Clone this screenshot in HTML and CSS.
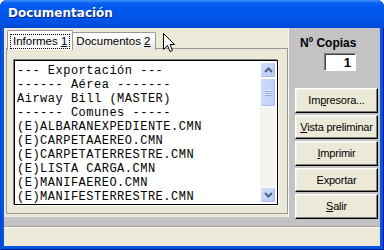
FILE: index.html
```html
<!DOCTYPE html>
<html lang="es">

<head>
    <meta charset="UTF-8">
    <link rel="stylesheet" href="styles.css">
    <title>Documentación</title>
</head>

<body>
    <div class="window">
        <div class="titlebar">Documentación</div>
        <div class="client">
            <div class="main">
                <div class="tabsArea">
                    <div class="tabstrip">
                        <div class="tab selected"><span class="focus">Informes <u>1</u></span></div>
                        <div class="tab">Documentos <u>2</u></div>
                    </div>
                    <div class="tabpage">
                        <div class="listbox">
                            <div class="lines">
                                <div class="line">--- Exportación ---</div>
                                <div class="line">------ Aérea -------</div>
                                <div class="line">Airway Bill (MASTER)</div>
                                <div class="line">------ Comunes -----</div>
                                <div class="line">(E)ALBARANEXPEDIENTE.CMN</div>
                                <div class="line">(E)CARPETAAEREO.CMN</div>
                                <div class="line">(E)CARPETATERRESTRE.CMN</div>
                                <div class="line">(E)LISTA CARGA.CMN</div>
                                <div class="line">(E)MANIFAEREO.CMN</div>
                                <div class="line">(E)MANIFESTERRESTRE.CMN</div>
                            </div>
                            <div class="scrollbar">
                                <div class="sbtn">
                                    <svg width="9" height="6" viewBox="0 0 9 6"><path d="M1 5 L4.5 1.5 L8 5" fill="none" stroke="#4d6185" stroke-width="2"/></svg>
                                </div>
                                <div class="track">
                                    <div class="thumb">
                                        <svg width="7" height="7" viewBox="0 0 7 7"><path d="M0 1.5h7M0 3.5h7M0 5.5h7" stroke="#e8eefc" stroke-width="1"/><path d="M0 2.5h7M0 4.5h7M0 6.5h7" stroke="#8ca4dc" stroke-width="1"/></svg>
                                    </div>
                                </div>
                                <div class="sbtn">
                                    <svg width="9" height="6" viewBox="0 0 9 6"><path d="M1 1 L4.5 4.5 L8 1" fill="none" stroke="#4d6185" stroke-width="2"/></svg>
                                </div>
                            </div>
                        </div>
                    </div>
                </div>
                <div class="side">
                    <div class="copiasLabel">Nº Copias</div>
                    <div class="copias">1</div>
                    <div class="buttons">
                        <div class="btn">Im<u>p</u>resora...</div>
                        <div class="btn"><u>V</u>ista preliminar</div>
                        <div class="btn"><u>I</u>mprimir</div>
                        <div class="btn">Exportar</div>
                        <div class="btn"><u>S</u>alir</div>
                    </div>
                </div>
            </div>
            <div class="statusbar"></div>
        </div>
        <svg class="cursor" width="12" height="20" viewBox="0 0 12 20">
            <path d="M0.5 0.5 L0.5 16.5 L4.5 12.5 L7 18.5 L9.5 17.5 L7 11.5 L11.5 11.5 Z" fill="#fff" stroke="#000" stroke-width="1"/>
        </svg>
    </div>
</body>

</html>
```

FILE: styles.css
```css
* {
    padding: 0;
    margin: 0;
    box-sizing: border-box;
}

body {
    width: 384px;
    height: 250px;
    overflow: hidden;
    font-family: "Liberation Sans", Arial, sans-serif;
    font-size: 11px;
    color: #000;
}

.window {
    position: relative;
    width: 384px;
    height: 250px;
    background-color: #0055e5;
    border-radius: 7px 7px 0 0;
    padding: 0 4px 4px 4px;
    display: flex;
    flex-direction: column;
    box-shadow: inset 1px 0 0 #0a3fbf, inset -1px 0 0 #00138c, inset 0 -1px 0 #00138c;
}

.titlebar {
    height: 28px;
    margin: 0 -4px;
    padding: 6px 0 0 8px;
    border-radius: 7px 7px 0 0;
    background: linear-gradient(#3d95ff 0, #0a62f2 3px, #0058ee 8px, #0055e8 18px, #0050e0 24px, #0046d4 28px);
    color: #fff;
    font-family: "DejaVu Sans", sans-serif;
    font-weight: bold;
    font-size: 12px;
    text-shadow: 1px 1px 0 #0a1e7a;
}

.client {
    flex: 1;
    display: flex;
    flex-direction: column;
    background-color: #ece9d8;
}

.main {
    height: 199px;
    display: flex;
    background-color: #c3c3c3;
    border-bottom: 1px solid #a0a0a0;
}

.tabsArea {
    width: 285px;
    height: 189px;
    background-color: #ece9d8;
    border-right: 1px solid #f8f8f4;
    padding: 3px 0 0 2px;
    display: flex;
    flex-direction: column;
}

.tabstrip {
    display: flex;
    height: 18px;
    padding-left: 1px;
    position: relative;
    z-index: 1;
    white-space: nowrap;
    font-size: 11.5px;
}

.tab {
    height: 18px;
    margin-top: 1px;
    padding: 2px 4px 0 3px;
    border: 1px solid #919b9c;
    border-bottom: none;
    border-radius: 2px 2px 0 0;
    background: linear-gradient(#fefefe, #f4f3ee 60%, #e8e6dc);
    margin-left: -1px;
}

.tab.selected {
    height: 20px;
    margin-top: -1px;
    padding: 3px 2px 0 2px;
    background: #fcfcfe;
    margin-left: 0;
}

.focus {
    display: inline-block;
    border: 1px dotted #000;
    padding: 0 2px 1px 2px;
    line-height: 12px;
}

.tabpage {
    width: 282px;
    height: 166px;
    margin-top: -1px;
    border: 1px solid #919b9c;
    background-color: #ece9d8;
    padding: 11px 0 0 7px;
}

.listbox {
    width: 264px;
    height: 145px;
    background-color: #fff;
    border: 1px solid #000;
    box-shadow: -1px -1px 0 #808080, 1px 1px 0 #fff;
    display: flex;
    padding: 1px 1px 0 2px;
}

.lines {
    flex: 1;
    padding-top: 2px;
    font-family: "Liberation Mono", "Courier New", monospace;
    font-size: 12px;
    letter-spacing: 0.5px;
    line-height: 14px;
    overflow: hidden;
}

.line {
    white-space: pre;
}

.scrollbar {
    width: 16px;
    display: flex;
    flex-direction: column;
    background-color: #f5f4ee;
    margin-bottom: 1px;
}

.sbtn {
    height: 16px;
    border: 1px solid #fff;
    border-radius: 2px;
    background: linear-gradient(135deg, #d0defc, #b8cbf6);
    box-shadow: inset -1px -1px 0 #a8bbe9;
    display: flex;
    align-items: center;
    justify-content: center;
}

.track {
    flex: 1;
}

.thumb {
    height: 29px;
    border: 1px solid #fff;
    border-radius: 2px;
    background: linear-gradient(90deg, #cddbfc, #bccffa);
    box-shadow: inset -1px -1px 0 #a8bbe9;
    display: flex;
    align-items: center;
    justify-content: center;
}

.side {
    flex: 1;
    display: flex;
    flex-direction: column;
    align-items: flex-end;
    padding: 8px 2px 0 6px;
}

.copiasLabel {
    align-self: flex-start;
    padding-left: 5px;
    font-weight: bold;
    font-size: 12px;
}

.copias {
    width: 32px;
    height: 18px;
    margin: 3px 22px 0 0;
    background-color: #fff;
    border: 1px solid #808080;
    border-right-color: #fff;
    border-bottom-color: #fff;
    box-shadow: inset 1px 1px 0 #404040;
    text-align: right;
    padding: 1px 4px 0 0;
    font-weight: bold;
    font-size: 13px;
}

.buttons {
    margin-top: 17px;
    width: 83px;
    display: flex;
    flex-direction: column;
    gap: 2px;
}

.btn {
    height: 24.5px;
    line-height: 22px;
    text-align: center;
    white-space: nowrap;
    letter-spacing: -0.2px;
    background-color: #ece9d8;
    border: 1px solid;
    border-color: #fff #000 #000 #fff;
    box-shadow: inset -1px -1px 0 #808080, inset 1px 1px 0 #f4f3ee;
}

.statusbar {
    flex: 1;
    border-top: 1px solid #fff;
    background-color: #ece9d8;
}

.cursor {
    position: absolute;
    left: 163px;
    top: 33px;
}
```
